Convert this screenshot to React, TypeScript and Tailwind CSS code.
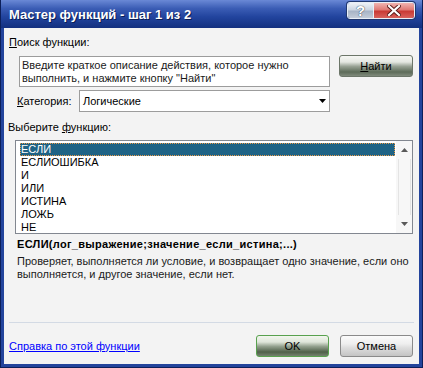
const functions = ['ЕСЛИ', 'ЕСЛИОШИБКА', 'И', 'ИЛИ', 'ИСТИНА', 'ЛОЖЬ', 'НЕ']

function TitleButtons() {
  return (
    <div className="flex h-[17px] mt-[2px] mr-[8px] rounded-[3px] border border-[#e8eef6] overflow-hidden shadow-[0_0_0_1px_#20386f]">
      <div className="w-[26px] h-full flex items-center justify-center bg-[linear-gradient(to_bottom,#eef2f6_0%,#ccd6e2_45%,#a7b4c6_55%,#c3ccd8_100%)] border-r border-[#e8eef6]">
        <span className="text-[15px] leading-none font-bold text-white [text-shadow:0_0_1px_#3a4658,0_0_1px_#3a4658]">?</span>
      </div>
      <div className="w-[40px] h-full flex items-center justify-center bg-[linear-gradient(to_bottom,#f1b4b0_0%,#e07a74_45%,#c93a34_55%,#d8625c_100%)]">
        <svg width="14" height="11" viewBox="0 0 14 11">
          <path d="M2 1 L12 10 M12 1 L2 10" stroke="#5b1a18" strokeWidth="4" strokeLinecap="square" />
          <path d="M2 1 L12 10 M12 1 L2 10" stroke="#ffffff" strokeWidth="2.2" strokeLinecap="square" />
        </svg>
      </div>
    </div>
  )
}

function Arrow({ up, color }: { up?: boolean; color: string }) {
  return (
    <svg width="7" height="4" viewBox="0 0 7 4">
      <path d={up ? 'M0 4 L3.5 0 L7 4 Z' : 'M0 0 L7 0 L3.5 4 Z'} fill={color} />
    </svg>
  )
}

export default function App() {
  return (
    <div className="w-[423px] h-[368px] flex flex-col bg-[#23449c] border-x border-b border-[#0c1f5a] font-['Liberation_Sans',Arial,sans-serif] text-[11px] leading-[13px] text-black overflow-hidden">
      <div className="h-[28px] shrink-0 flex items-start justify-between -mx-px bg-[linear-gradient(to_bottom,#6a89d6_0%,#3b5db5_30%,#22449e_60%,#13307f_100%)]">
        <div className="pl-[9px] pt-[8px] text-[13px] leading-[14px] font-bold text-white [text-shadow:1px_1px_0_#0b1e55]">
          Мастер функций - шаг 1 из 2
        </div>
        <TitleButtons />
      </div>

      <div className="flex-1 flex flex-col mx-[3px] mb-[3px] bg-[#f3f3f3] pl-[5px]">
        <div className="mt-[8px]">
          <span className="underline">П</span>оиск функции:
        </div>

        <div className="flex items-start mt-[6px]">
          <div className="ml-[10px] mt-[1px] w-[311px] h-[31px] border border-[#9c9c9c] bg-white px-[2px] pt-[2px] text-[#1a1a1a]">
            Введите краткое описание действия, которое нужно
            <br />
            выполнить, и нажмите кнопку "Найти"
          </div>
          <button className="ml-[9px] w-[74px] h-[22px] rounded-[3px] border border-[#6c7669] bg-[linear-gradient(to_bottom,#f6f7f4_0%,#e4e7e1_30%,#98a294_52%,#5d6b59_80%,#808a7c_100%)] text-[11px] leading-[13px]">
            <span className="underline">Н</span>айти
          </button>
        </div>

        <div className="flex items-center mt-[3px]">
          <div className="ml-[8px] w-[62px]">
            <span className="underline">К</span>атегория:
          </div>
          <div className="w-[251px] h-[22px] border border-[#9c9c9c] bg-white flex items-center justify-between pl-[3px] pr-[3px]">
            <span>Логические</span>
            <Arrow color="#000000" />
          </div>
        </div>

        <div className="mt-[9px] -ml-px">
          Выберите <span className="underline">ф</span>ункцию:
        </div>

        <div className="mt-[6px] ml-[6px] w-[398px] h-[94px] border border-[#828790] bg-white flex">
          <div className="flex-1 pl-[4px] pt-[2px] pr-[1px]">
            {functions.map((name, i) => (
              <div
                key={name}
                className={
                  i === 0
                    ? 'h-[13px] pl-px bg-[#1f6385] text-white outline outline-1 outline-dotted outline-[#e89a4a] -outline-offset-1'
                    : 'h-[13px] pl-px'
                }
              >
                {name}
              </div>
            ))}
          </div>
          <div className="w-[16px] flex flex-col items-center bg-[#f7f7f7]">
            <div className="h-[16px] flex items-center justify-center pt-[2px]">
              <Arrow up color="#5a5a5a" />
            </div>
            <div className="flex-1 w-[13px] my-[2px] border-x border-[#e4e4e4]" />
            <div className="h-[16px] flex items-center justify-center pb-[2px]">
              <Arrow color="#5a5a5a" />
            </div>
          </div>
        </div>

        <div className="mt-[4px] ml-[8px] font-bold tracking-[0.3px]">
          ЕСЛИ(лог_выражение;значение_если_истина;...)
        </div>
        <div className="mt-[4px] ml-[8px] text-[#1a1a1a]">
          Проверяет, выполняется ли условие, и возвращает одно значение, если оно
          <br />
          выполняется, и другое значение, если нет.
        </div>

        <div className="mt-auto mr-[5px] h-px bg-[#d3dae4]" />

        <div className="flex items-center mt-[12px] mb-[7px] pr-[6px]">
          <a href="#" className="text-[#0000ff] underline">
            Справка по этой функции
          </a>
          <button className="ml-auto w-[73px] h-[22px] rounded-[3px] border border-[#58a14e] bg-[linear-gradient(to_bottom,#f2f6ee_0%,#dfe6da_30%,#93a18e_52%,#4f6049_80%,#74826e_100%)] text-[11px] leading-[13px]">
            OK
          </button>
          <button className="ml-[11px] w-[73px] h-[22px] rounded-[3px] border border-[#8a8a8a] bg-[linear-gradient(to_bottom,#fbfbfb_0%,#eeeeee_40%,#dcdcdc_60%,#c4c4c4_100%)] text-[11px] leading-[13px]">
            Отмена
          </button>
        </div>
      </div>
    </div>
  )
}
